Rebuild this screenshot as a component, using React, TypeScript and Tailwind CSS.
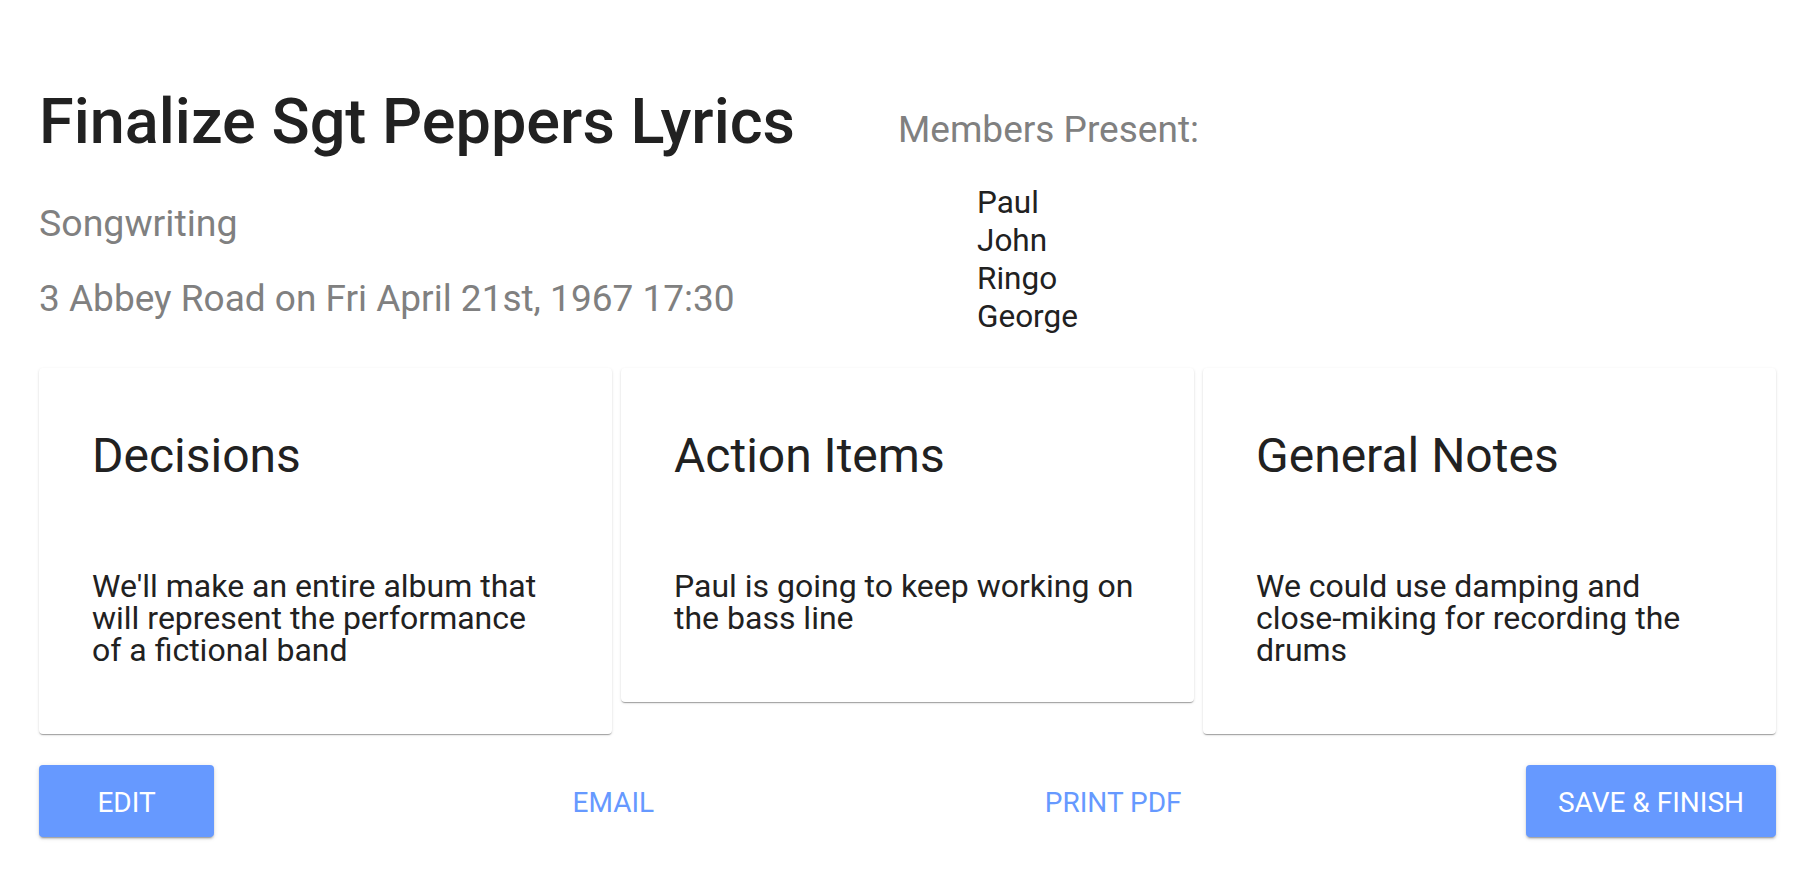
const members = ['Paul', 'John', 'Ringo', 'George']

const cards = [
  {
    title: 'Decisions',
    body: "We'll make an entire album that will represent the performance of a fictional band",
  },
  {
    title: 'Action Items',
    body: 'Paul is going to keep working on the bass line',
  },
  {
    title: 'General Notes',
    body: 'We could use damping and close-miking for recording the drums',
  },
]

function NoteCard({ title, body }: { title: string; body: string }) {
  return (
    <div className="flex-1 bg-white rounded-[4px] pt-[60px] pl-[53px] pr-[60px] pb-[68px] shadow-[0_2px_1px_-1px_rgba(0,0,0,0.2),0_1px_1px_0_rgba(0,0,0,0.14),0_1px_3px_0_rgba(0,0,0,0.12)]">
      <h2 className="text-[48px] leading-[55px] font-normal text-[#212121]">{title}</h2>
      <p className="mt-[87px] text-[32px] leading-[32px] text-[#212121]">{body}</p>
    </div>
  )
}

export default function App() {
  return (
    <div className="min-h-screen bg-white pl-[39px] pr-[31px] font-['Roboto',sans-serif]">
      <div className="flex pt-[86px]">
        <div className="w-[859px] shrink-0">
          <h1 className="text-[63px] leading-[72px] font-medium text-[#212121] whitespace-nowrap">
            Finalize Sgt Peppers Lyrics
          </h1>
          <div className="mt-[44px] text-[37.5px] leading-[42px] text-[#808080]">Songwriting</div>
          <div className="mt-[34px] text-[37px] leading-[42px] text-[#808080]">
            3 Abbey Road on Fri April 21st, 1967 17:30
          </div>
        </div>
        <div className="pt-[22px]">
          <div className="text-[37px] leading-[43px] text-[#808080]">Members Present:</div>
          <ul className="mt-[33px] pl-[79px]">
            {members.map(m => (
              <li key={m} className="text-[31.5px] leading-[38px] text-[#212121]">{m}</li>
            ))}
          </ul>
        </div>
      </div>

      <div className="mt-[32px] flex items-start gap-[9px]">
        {cards.map(c => (
          <NoteCard key={c.title} title={c.title} body={c.body} />
        ))}
      </div>

      <div className="mt-[31px] flex items-center justify-between">
        <button className="h-[72px] min-w-[175px] px-[32px] pt-[3px] rounded-[4px] bg-[#6699ff] text-white text-[28px] uppercase shadow-[0_3px_1px_-2px_rgba(0,0,0,0.2),0_2px_2px_0_rgba(0,0,0,0.14),0_1px_5px_0_rgba(0,0,0,0.12)]">
          Edit
        </button>
        <button className="h-[72px] min-w-[174px] px-[32px] pt-[3px] text-[#6699ff] text-[28px] uppercase">
          Email
        </button>
        <button className="h-[72px] min-w-[174px] px-[32px] pt-[3px] text-[#6699ff] text-[28px] uppercase">
          Print PDF
        </button>
        <button className="h-[72px] min-w-[175px] px-[32px] pt-[3px] rounded-[4px] bg-[#6699ff] text-white text-[28px] uppercase shadow-[0_3px_1px_-2px_rgba(0,0,0,0.2),0_2px_2px_0_rgba(0,0,0,0.14),0_1px_5px_0_rgba(0,0,0,0.12)]">
          Save &amp; Finish
        </button>
      </div>
    </div>
  )
}
